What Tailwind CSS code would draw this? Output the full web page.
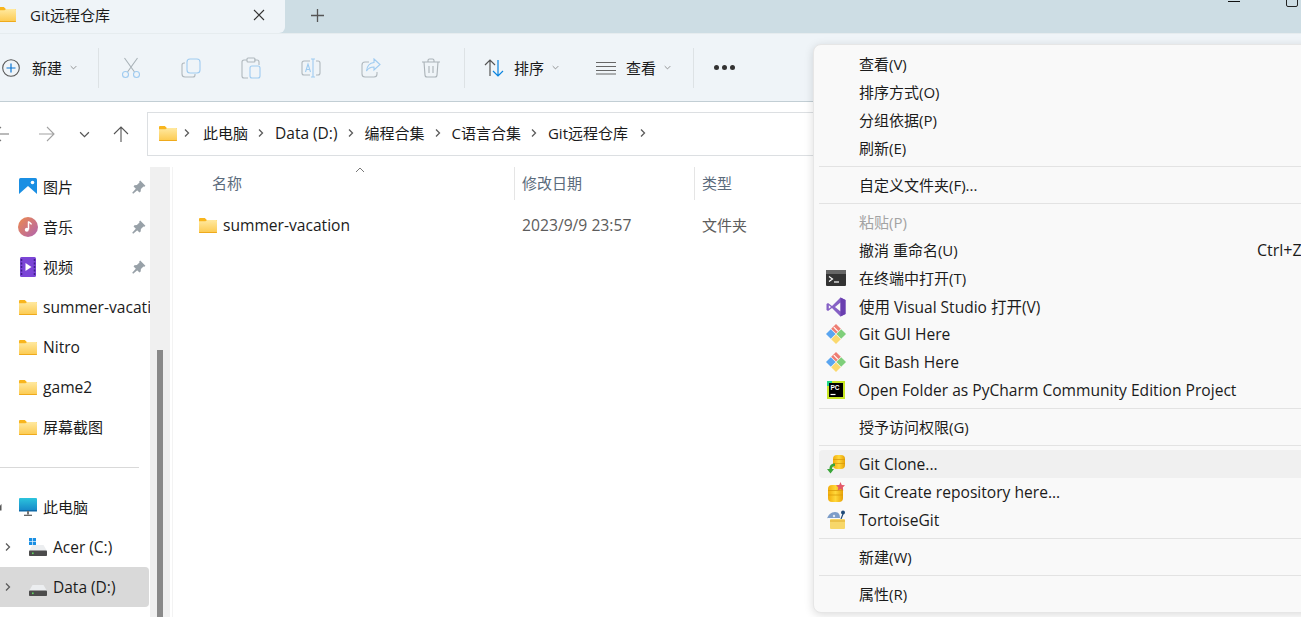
<!DOCTYPE html>
<html><head><meta charset="utf-8">
<script src="https://cdn.jsdelivr.net/npm/@tailwindcss/browser@4"></script>
</head>
<body class="bg-white">
<svg width="0" height="0" class="absolute">
<defs>
<linearGradient id="fg" x1="0" y1="0" x2="0" y2="1"><stop offset="0" stop-color="#ffe9a0"/><stop offset="1" stop-color="#fcc94e"/></linearGradient>
<linearGradient id="mus" x1="0" y1="0" x2="1" y2="1"><stop offset="0" stop-color="#ee8a4c"/><stop offset="1" stop-color="#b063b0"/></linearGradient>
<linearGradient id="mon" x1="0" y1="0" x2="0" y2="1"><stop offset="0" stop-color="#2cc4dc"/><stop offset="1" stop-color="#1686c8"/></linearGradient>
<linearGradient id="coin" x1="0" y1="0" x2="1" y2="0"><stop offset="0" stop-color="#f2ac0c"/><stop offset="0.5" stop-color="#ffd83a"/><stop offset="1" stop-color="#e8a208"/></linearGradient>
<symbol id="folder" viewBox="0 0 18 15"><path d="M0 1.200C0 .5.500 0 1.200 0h4.600l2 2H18v2H0z" fill="#f8b51d"/><path d="M0 3.200h6.500l1.600-1.200H17c.6 0 1 .4 1 1V14c0 .6-.4 1-1 1H1c-.6 0-1-.4-1-1z" fill="url(#fg)"/><path d="M0 14h18c0 .6-.4 1-1 1H1c-.6 0-1-.4-1-1z" fill="#efaa1c"/></symbol>
<symbol id="pin" viewBox="0 0 14 14"><path d="M8.200.6 13.400 5.800 12.400 6.800 11.500 6.500 8.900 9.100 8.700 11.600 7.400 12.400 1.600 6.600 2.400 5.300 4.900 5.100 7.500 2.500 7.200 1.600Z M4 8.400 5.600 10 1.200 13.800.2 12.800Z" fill="#98a1a8"/></symbol>
<symbol id="cv" viewBox="0 0 8 10"><path d="M2 1.500 5.500 5 2 8.500" fill="none" stroke="#5c5c5c" stroke-width="1.300"/></symbol>
<symbol id="dn" viewBox="0 0 10 6"><path d="M1 1 5 5 9 1" fill="none" stroke="#6c6c6c" stroke-width="1"/></symbol>
<symbol id="git" viewBox="0 0 20 20"><path d="M10 0 14.800 4.800 10 9.600 5.200 4.800Z" fill="#ee7d72"/><path d="M4.800 5.200 9.600 10 4.800 14.800 0 10Z" fill="#5aa5f0"/><path d="M15.200 5.200 20 10 15.200 14.800 10.400 10Z" fill="#7fcf7a"/><path d="M10 10.400 14.800 15.200 10 20 5.200 15.200Z" fill="#fbd96e"/><path d="M7.800 3.200 12 7.400" stroke="#fff" stroke-width="1.200"/></symbol>
<symbol id="drive" viewBox="0 0 18 11"><path d="M3.500 0h11L18 6H0z" fill="#eceef0"/><rect y="5.500" width="18" height="5.500" rx=".8" fill="#4c4c4c"/><rect x="3" y="7.500" width="1.600" height="1.600" fill="#5fdc5f"/></symbol>
</defs>
</svg>

<div class="relative w-[1301px] h-[617px] overflow-hidden bg-white text-[15px] leading-5 text-[#1b1b1b] font-['Open_Sans','Noto_Sans_CJK_SC',sans-serif]">

  <!-- tab strip -->
  <div class="h-[33px] bg-[#cddde4] flex relative">
    <div class="w-[285px] h-[33px] bg-[#eff4f8] rounded-br-[6px] flex items-center pl-[30px] pb-[4px] relative">
      <svg class="absolute left-[-2px] top-[7px] w-[18px] h-[15px]"><use href="#folder"/></svg>
      <span class="w-[223px]">Git远程仓库</span>
      <svg width="12" height="12" viewBox="0 0 12 12"><path d="M1 1 11 11M11 1 1 11" stroke="#333" stroke-width="1.100"/></svg>
    </div>
    <svg class="ml-[26px] mt-[9px]" width="13" height="13" viewBox="0 0 13 13"><path d="M6.500 0v13M0 6.500h13" stroke="#555" stroke-width="1.300"/></svg>
    <div class="absolute left-[1228px] top-[1px] w-[12px] h-px bg-[#111]"></div>
    <div class="absolute left-[1286px] top-[-4px] w-[12px] h-[11px] border border-[#222] rounded-[2px]"></div>
  </div>

  <!-- toolbar -->
  <div class="h-[69px] bg-[#eff4f8] border-t border-[#e6ecef] border-b border-b-[#c2ced4] flex items-center relative">
    <div class="flex items-center w-[98px] pl-[2px]">
      <svg width="18" height="18" viewBox="0 0 18 18"><circle cx="9" cy="9" r="8.300" fill="none" stroke="#555" stroke-width="1.100"/><path d="M9 4.500v9M4.500 9h9" stroke="#0a74d1" stroke-width="1.200"/></svg>
      <span class="ml-[12px]">新建</span>
      <svg class="ml-[8px]" width="7" height="5"><use href="#dn"/></svg>
    </div>
    <div class="w-px h-[40px] bg-[#dde2e5]"></div>
    <div class="flex items-center w-[365px] pl-[22px] gap-[40px]">
      <svg width="20" height="22" viewBox="0 0 20 22" fill="none" stroke-width="1.100"><path d="M3.500 1 13.500 15M16.500 1 6.500 15" stroke="#a9b2b8"/><circle cx="4.500" cy="17.500" r="3" stroke="#9fcbf0"/><circle cx="15.500" cy="17.500" r="3" stroke="#9fcbf0"/></svg>
      <svg width="20" height="20" viewBox="0 0 20 20" fill="none" stroke-width="1.100"><path d="M4 5H3a2 2 0 0 0-2 2v9a3 3 0 0 0 3 3h8a2 2 0 0 0 2-2v-1" stroke="#b0b8bd"/><rect x="6" y="1" width="13" height="14" rx="3" stroke="#9fcbf0"/></svg>
      <svg width="20" height="22" viewBox="0 0 20 22" fill="none" stroke-width="1.100"><path d="M6 3H3a2 2 0 0 0-2 2v14a2 2 0 0 0 2 2h4M13 3h3a2 2 0 0 1 2 2v3" stroke="#b0b8bd"/><rect x="6" y="1" width="8" height="4" rx="1" stroke="#b0b8bd"/><rect x="9" y="9" width="10" height="12" rx="2" stroke="#9fcbf0"/></svg>
      <svg width="20" height="20" viewBox="0 0 20 20" fill="none" stroke-width="1.100"><path d="M9 3H3a2 2 0 0 0-2 2v10a2 2 0 0 0 2 2h6M15 3h2a2 2 0 0 1 2 2v10a2 2 0 0 1-2 2h-2" stroke="#b0b8bd"/><path d="M12 1v18M10 1h4M10 19h4" stroke="#9fcbf0"/><path d="M4.500 14 7 6l2.500 8M5.300 11.500h3.400" stroke="#9fcbf0"/></svg>
      <svg width="20" height="20" viewBox="0 0 20 20" fill="none" stroke-width="1.100"><path d="M8 4H4a3 3 0 0 0-3 3v9a3 3 0 0 0 3 3h9a3 3 0 0 0 3-3v-2" stroke="#b0b8bd"/><path d="M13 1l6 5.500-6 5.500V9c-4 0-6 1.500-7.500 4C6 8 8.500 5 13 4.500z" stroke="#9fcbf0"/></svg>
      <svg width="20" height="20" viewBox="0 0 20 20" fill="none" stroke="#aab2b7" stroke-width="1.100"><path d="M1 4h18M7 4V2.500A1.500 1.500 0 0 1 8.500 1h3A1.500 1.500 0 0 1 13 2.500V4M3 4l1 13a2 2 0 0 0 2 2h8a2 2 0 0 0 2-2l1-13M8 8v7M12 8v7"/></svg>
    </div>
    <div class="w-px h-[40px] bg-[#dde2e5]"></div>
    <div class="flex items-center w-[112px] pl-[19px]">
      <svg width="20" height="18" viewBox="0 0 20 18" fill="none" stroke-width="1.200"><path d="M6 17V1M1 6l5-5 5 5" stroke="#555"/><path d="M14 1v16M9 12l5 5 5-5" stroke="#0a84e0"/></svg>
      <span class="ml-[10px]">排序</span>
      <svg class="ml-[8px]" width="7" height="5"><use href="#dn"/></svg>
    </div>
    <div class="flex items-center w-[116px] pl-[19px]">
      <svg width="20" height="14" viewBox="0 0 20 14" fill="none" stroke="#666" stroke-width="1.100"><path d="M0 1.500h20M0 5.500h20M0 9.500h20M0 13h20"/></svg>
      <span class="ml-[10px]">查看</span>
      <svg class="ml-[8px]" width="7" height="5"><use href="#dn"/></svg>
    </div>
    <div class="w-px h-[40px] bg-[#dde2e5]"></div>
    <div class="flex gap-[3px] pl-[20px]">
      <div class="w-[5px] h-[5px] rounded-full bg-[#333]"></div>
      <div class="w-[5px] h-[5px] rounded-full bg-[#333]"></div>
      <div class="w-[5px] h-[5px] rounded-full bg-[#333]"></div>
    </div>
  </div>

  <!-- address row -->
  <div class="h-[65px] flex items-start pt-[10px]">
    <div class="w-[147px] relative flex items-center h-[44px]">
      <svg class="absolute left-[-7px] top-[14px]" width="17" height="16" viewBox="0 0 17 16" fill="none" stroke="#777" stroke-width="1.100"><path d="M16 8H1M8 1 1 8l7 7"/></svg>
      <svg class="absolute left-[38px] top-[14px]" width="17" height="16" viewBox="0 0 17 16" fill="none" stroke="#a2a2a2" stroke-width="1.100"><path d="M1 8h15M9 1l7 7-7 7"/></svg>
      <svg class="absolute left-[79px] top-[19px]" width="11" height="7" viewBox="0 0 10 6"><path d="M1 1 5 5 9 1" fill="none" stroke="#555" stroke-width="1.100"/></svg>
      <svg class="absolute left-[113px] top-[14px]" width="16" height="17" viewBox="0 0 16 17" fill="none" stroke="#555" stroke-width="1.100"><path d="M8 16V1M1 8l7-7 7 7"/></svg>
    </div>
    <div class="h-[44px] flex-1 bg-white border border-[#dcdfe2] flex items-center pl-[11px] pb-[2px]">
      <svg width="18" height="15"><use href="#folder"/></svg>
      <svg class="ml-[6px] mr-[12px]" width="8" height="10"><use href="#cv"/></svg>
      <span>此电脑</span>
      <svg class="ml-[9px] mr-[10px]" width="8" height="10"><use href="#cv"/></svg>
      <span class="text-[15.500px]">Data (D:)</span>
      <svg class="ml-[9px] mr-[10px]" width="8" height="10"><use href="#cv"/></svg>
      <span>编程合集</span>
      <svg class="ml-[9px] mr-[10px]" width="8" height="10"><use href="#cv"/></svg>
      <span>C语言合集</span>
      <svg class="ml-[9px] mr-[10px]" width="8" height="10"><use href="#cv"/></svg>
      <span>Git远程仓库</span>
      <svg class="ml-[11px]" width="8" height="10"><use href="#cv"/></svg>
    </div>
  </div>

  <!-- body -->
  <div class="h-[450px] flex">
    <!-- sidebar -->
    <div class="w-[150px] shrink-0 overflow-hidden">
      <div class="h-[40px] flex items-center pl-[19px]">
        <svg width="18" height="18" viewBox="0 0 18 18"><rect width="18" height="18" rx="1.500" fill="#1a8fe3"/><path d="M0 16 9 8l9 8v2H0z" fill="#fff"/><circle cx="13.500" cy="4.500" r="1.800" fill="#fff"/></svg>
        <span class="ml-[6px] w-[89px]">图片</span>
        <svg width="14" height="14"><use href="#pin"/></svg>
      </div>
      <div class="h-[40px] flex items-center pl-[18px]">
        <svg width="20" height="20" viewBox="0 0 20 20"><circle cx="10" cy="10" r="10" fill="url(#mus)"/><path d="M10.500 4.500v8" stroke="#fff" stroke-width="1.500"/><path d="M10.500 4.500c1 1.500 2.500 1.500 3 3" stroke="#fff" stroke-width="1.300" fill="none"/><circle cx="8.800" cy="12.800" r="2" fill="#fff"/></svg>
        <span class="ml-[5px] w-[89px]">音乐</span>
        <svg width="14" height="14"><use href="#pin"/></svg>
      </div>
      <div class="h-[40px] flex items-center pl-[20px]">
        <svg width="16" height="20" viewBox="0 0 16 20"><rect width="16" height="20" rx="1.500" fill="#7b45d6"/><path d="M5.500 6v8l6-4z" fill="#fff"/><path d="M1.500 2v16M14.500 2v16" stroke="#3f1f8a" stroke-width="1.500" stroke-dasharray="2 1.500"/></svg>
        <span class="ml-[7px] w-[89px]">视频</span>
        <svg width="14" height="14"><use href="#pin"/></svg>
      </div>
      <div class="h-[40px] flex items-center pl-[19px] whitespace-nowrap text-[15.600px]"><svg class="shrink-0" width="18" height="15"><use href="#folder"/></svg><span class="ml-[6px]">summer-vacation</span></div>
      <div class="h-[40px] flex items-center pl-[19px] text-[15.600px]"><svg width="18" height="15"><use href="#folder"/></svg><span class="ml-[6px]">Nitro</span></div>
      <div class="h-[40px] flex items-center pl-[19px] text-[15.600px]"><svg width="18" height="15"><use href="#folder"/></svg><span class="ml-[6px]">game2</span></div>
      <div class="h-[40px] flex items-center pl-[19px]"><svg width="18" height="15"><use href="#folder"/></svg><span class="ml-[6px]">屏幕截图</span></div>
      <div class="h-[40px] flex items-center"><div class="w-[139px] h-px bg-[#d9d9d9]"></div></div>
      <div class="h-[40px] flex items-center pl-[19px] relative">
        <svg class="absolute left-[-5px] top-[17px]" width="7" height="7" viewBox="0 0 7 7"><path d="M6.500 0v6.500H0z" fill="#555"/></svg>
        <svg width="18" height="18" viewBox="0 0 18 18"><rect y="0" width="18" height="13" rx="1" fill="url(#mon)"/><rect y="12" width="18" height="1.500" fill="#0f6aa8"/><path d="M9 13v3.500" stroke="#777" stroke-width="2"/><path d="M5 17.300h8" stroke="#555" stroke-width="1.200"/></svg>
        <span class="ml-[6px]">此电脑</span>
      </div>
      <div class="h-[40px] flex items-center pl-[4px]">
        <svg width="8" height="10"><use href="#cv"/></svg>
        <div class="relative ml-[17px] w-[18px] h-[18px]">
          <svg class="absolute left-0 bottom-0" width="18" height="11"><use href="#drive"/></svg>
          <svg class="absolute left-0 top-0" width="7" height="7" viewBox="0 0 7 7" fill="#1a8fe3"><rect width="3.200" height="3.200"/><rect x="3.800" width="3.200" height="3.200"/><rect y="3.800" width="3.200" height="3.200"/><rect x="3.800" y="3.800" width="3.200" height="3.200"/></svg>
        </div>
        <span class="ml-[6px] text-[15.500px]">Acer (C:)</span>
      </div>
      <div class="h-[40px] w-[149px] flex items-center pl-[4px] bg-[#d9d9d9] rounded-r-[4px]">
        <svg width="8" height="10"><use href="#cv"/></svg>
        <div class="relative ml-[17px] w-[18px] h-[18px]">
          <svg class="absolute left-0 bottom-0" width="18" height="11"><use href="#drive"/></svg>
        </div>
        <span class="ml-[6px] text-[15.500px]">Data (D:)</span>
      </div>
    </div>
    <!-- scrollbar -->
    <div class="w-[20px] shrink-0 bg-[#f0f0f0] flex flex-col pl-[7px] pt-[183px]">
      <div class="w-[6px] flex-1 bg-[#8a8a8a]"></div>
    </div>
    <!-- files -->
    <div class="flex-1 ml-[2px] border-l border-[#f3f3f3]">
      <div class="h-[33px] flex items-center text-[#5b6b7c] relative">
        <svg class="absolute left-[182px] top-[0px]" width="10" height="6" viewBox="0 0 10 6"><path d="M1 5 5 1l4 4" fill="none" stroke="#777" stroke-width="1"/></svg>
        <div class="w-[341px] h-full flex items-center pl-[39px] pb-[2px]"><span>名称</span></div>
        <div class="w-[180px] h-full flex items-center pl-[7px] pb-[2px] border-l border-[#e5e5e5]">修改日期</div>
        <div class="flex-1 h-full flex items-center pl-[7px] pb-[2px] border-l border-[#e5e5e5]">类型</div>
      </div>
      <div class="h-[50px] flex items-center text-[#5c5c5c]">
        <div class="w-[341px] flex items-center pl-[26px] text-[#1b1b1b] text-[15.600px]">
          <svg width="18" height="15"><use href="#folder"/></svg><span class="ml-[6px]">summer-vacation</span>
        </div>
        <div class="w-[180px] pl-[8px] text-[15.700px]">2023/9/9 23:57</div>
        <div class="pl-[8px]">文件夹</div>
      </div>
    </div>
  </div>

  <!-- context menu -->
  <div class="absolute left-[813px] top-[44px] w-[520px] h-[569px] bg-[#f9f9f9] rounded-[8px] border border-[#e6e6e6] shadow-[0_2px_10px_rgba(0,0,0,0.14)] pt-[5px] pl-[5px]">
    <div class="h-[28px] flex items-center pl-[40px]">查看(V)</div>
    <div class="h-[28px] flex items-center pl-[40px]">排序方式(O)</div>
    <div class="h-[28px] flex items-center pl-[40px]">分组依据(P)</div>
    <div class="h-[28px] flex items-center pl-[40px]">刷新(E)</div>
    <div class="h-[9px] flex items-center"><div class="w-full h-px bg-[#e3e3e3]"></div></div>
    <div class="h-[28px] flex items-center pl-[40px]">自定义文件夹(F)...</div>
    <div class="h-[9px] flex items-center"><div class="w-full h-px bg-[#e3e3e3]"></div></div>
    <div class="h-[28px] flex items-center pl-[40px] text-[#a3a3a3]">粘贴(P)</div>
    <div class="h-[28px] flex items-center pl-[40px]"><span class="w-[398px]">撤消 重命名(U)</span><span class="text-[16px]">Ctrl+Z</span></div>
    <div class="h-[28px] flex items-center pl-[7px]">
      <svg class="mr-[13px]" width="20" height="16" viewBox="0 0 20 16"><rect width="20" height="16" rx="1" fill="#333"/><rect width="20" height="4" fill="#666"/><path d="M3 6.500 6.500 9 3 11.500" fill="none" stroke="#fff" stroke-width="1.200"/><path d="M8 12h5" stroke="#fff" stroke-width="1.200"/></svg>
      在终端中打开(T)
    </div>
    <div class="h-[28px] flex items-center pl-[7px] pt-[2px] text-[15.500px]">
      <svg class="mr-[13px]" width="20" height="20" viewBox="0 0 20 20"><path d="M14.500 0.500 19.500 3v14l-5 2.500L6 11l-4 3-1.500-1V7L2 6l4 3z" fill="#8661c5"/><path d="M14.500 5.500 9 10l5.500 4.500z" fill="#f9f9f9"/><path d="M2.800 8.200 5 10l-2.200 1.800z" fill="#f9f9f9"/><path d="M14.500 0.500 19.500 3v14l-5 2.500z" fill="#6a3fb0"/></svg>
      使用 Visual Studio 打开(V)
    </div>
    <div class="h-[28px] flex items-center pl-[7px] text-[15.600px]"><svg class="mr-[13px]" width="20" height="20"><use href="#git"/></svg>Git GUI Here</div>
    <div class="h-[28px] flex items-center pl-[7px] text-[15.600px]"><svg class="mr-[13px]" width="20" height="20"><use href="#git"/></svg>Git Bash Here</div>
    <div class="h-[28px] flex items-center pl-[8px] text-[15.600px]">
      <svg class="mr-[13px]" width="18" height="18" viewBox="0 0 18 18"><rect width="18" height="18" fill="#c8e626"/><rect x="0" y="0" width="5" height="5" fill="#21d789"/><rect x="2" y="2" width="14" height="14" fill="#000"/><text x="3.500" y="8.500" font-size="6.500" font-weight="700" fill="#fff" font-family="Liberation Sans">PC</text><path d="M3.500 13.500h5" stroke="#fff" stroke-width="1.200"/></svg>
      Open Folder as PyCharm Community Edition Project
    </div>
    <div class="h-[9px] flex items-center"><div class="w-full h-px bg-[#e3e3e3]"></div></div>
    <div class="h-[28px] flex items-center pl-[40px]">授予访问权限(G)</div>
    <div class="h-[9px] flex items-center"><div class="w-full h-px bg-[#e3e3e3]"></div></div>
    <div class="h-[28px] flex items-center pl-[7px] bg-[#f0f0f0] rounded-l-[4px] text-[15.600px]">
      <svg class="mr-[13px]" width="20" height="20" viewBox="0 0 20 20"><rect x="7" y="1" width="12" height="14" rx="4" fill="url(#coin)"/><path d="M7 5.500h12M7 9.500h12" stroke="#d99c0a" stroke-width=".8"/><path d="M9 9.500C4.500 9.500 3.500 12 3.500 15H1l3.500 4.500L8 15H6c0-2 1-3 3-3z" fill="#3aa63a"/></svg>
      Git Clone...
    </div>
    <div class="h-[28px] flex items-center pl-[7px] text-[15.600px]">
      <svg class="mr-[13px]" width="20" height="20" viewBox="0 0 20 20"><rect x="2" y="3" width="15" height="17" rx="4" fill="url(#coin)"/><path d="M2 8.500h15M2 13h15" stroke="#d99c0a" stroke-width=".8"/><path d="M14.500 0l1.300 3 3.200.3-2.400 2.100.7 3.200-2.800-1.700-2.800 1.700.7-3.200L10 3.300l3.200-.3z" fill="#e3596a"/></svg>
      Git Create repository here...
    </div>
    <div class="h-[28px] flex items-center pl-[7px] text-[15.600px]">
      <svg class="mr-[13px]" width="20" height="20" viewBox="0 0 20 20"><path d="M1 9c1-4 4-7 8-7s5 3 5 6H1z" fill="#7d9dc8"/><circle cx="8" cy="6" r="1.200" fill="#dfe7f2"/><circle cx="17" cy="2.500" r="2" fill="#1f4a78"/><path d="M15 9l2-5" stroke="#1f4a78" stroke-width="1.200"/><rect x="4" y="9" width="15" height="10" rx="1" fill="#f7d76a"/><path d="M4 11h15" stroke="#e0ad2d"/></svg>
      TortoiseGit
    </div>
    <div class="h-[9px] flex items-center"><div class="w-full h-px bg-[#e3e3e3]"></div></div>
    <div class="h-[28px] flex items-center pl-[40px]">新建(W)</div>
    <div class="h-[9px] flex items-center"><div class="w-full h-px bg-[#e3e3e3]"></div></div>
    <div class="h-[28px] flex items-center pl-[40px]">属性(R)</div>
  </div>
</div>
</body></html>
